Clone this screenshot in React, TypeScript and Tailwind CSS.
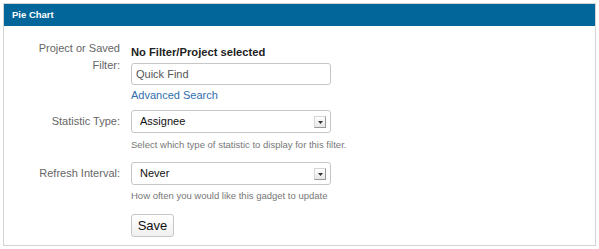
import React from 'react';

const SelectBox: React.FC<{ value: string }> = ({ value }) => (
  <div className="relative w-[200px] h-[23px] border border-[#c6c6c6] rounded-[3px] bg-white flex items-center pl-[8px] text-[11px] text-[#111]">
    <span>{value}</span>
    <div className="absolute right-[4px] top-[5px] w-[12px] h-[12px] border border-t-[#d6d6d6] border-l-[#d6d6d6] border-r-[#9a9a9a] border-b-[#9a9a9a] bg-gradient-to-b from-white to-[#e6e6e6] flex items-center justify-center">
      <svg width="5" height="3" viewBox="0 0 5 3">
        <path d="M0 0h5L2.5 3z" fill="#333" />
      </svg>
    </div>
  </div>
);

export default function App() {
  return (
    <div className="w-[599px] h-[249px] bg-white p-[3px] font-['Liberation_Sans',Arial,sans-serif]">
      <div className="h-[243px] border border-[#d4d4d4]">
        <div className="h-[22px] bg-[#03669a] text-white font-bold text-[9.5px] pl-[8px] flex items-center">
          Pie Chart
        </div>

        <div className="pt-[14px]">
          {/* Project or saved filter */}
          <div className="flex">
            <div className="w-[116px] text-right text-[11px] leading-[17px] text-[#666]">
              Project or Saved
              <br />
              Filter:
            </div>
            <div className="ml-[11px] pt-[4px]">
              <div className="text-[11.2px] leading-[16px] font-bold text-[#222]">No Filter/Project selected</div>
              <div className="mt-[3px] w-[200px] h-[22px] border border-[#c6c6c6] rounded-[3px] flex items-center pl-[4px] text-[11px] text-[#555]">
                Quick Find
              </div>
              <div className="mt-[2px] text-[11px] leading-[16px] text-[#2f6fae]">Advanced Search</div>
            </div>
          </div>

          {/* Statistic type */}
          <div className="flex mt-[7px]">
            <div className="w-[116px] text-right text-[11px] leading-[23px] text-[#666]">Statistic Type:</div>
            <div className="ml-[11px]">
              <SelectBox value="Assignee" />
              <div className="mt-[5px] text-[9.5px] leading-[14px] text-[#777]">
                Select which type of statistic to display for this filter.
              </div>
            </div>
          </div>

          {/* Refresh interval */}
          <div className="flex mt-[10px]">
            <div className="w-[116px] text-right text-[11px] leading-[23px] text-[#666]">Refresh Interval:</div>
            <div className="ml-[11px]">
              <SelectBox value="Never" />
              <div className="mt-[4px] text-[9.5px] leading-[14px] text-[#777]">
                How often you would like this gadget to update
              </div>
            </div>
          </div>

          <div className="flex mt-[11px]">
            <div className="w-[116px]" />
            <button className="ml-[11px] w-[43px] h-[23px] border border-[#c6c6c6] rounded-[3px] bg-gradient-to-b from-white to-[#f0f0f0] text-[13px] text-[#111]">
              Save
            </button>
          </div>
        </div>
      </div>
    </div>
  );
}
